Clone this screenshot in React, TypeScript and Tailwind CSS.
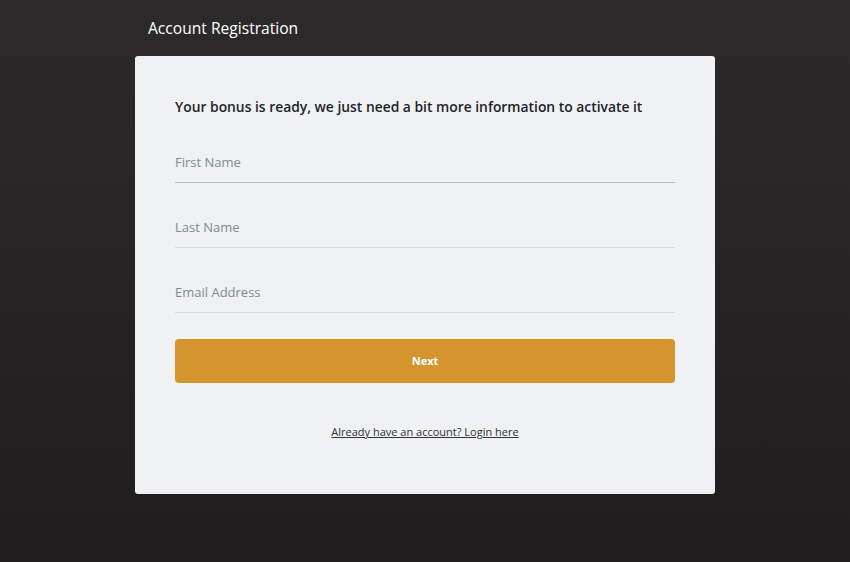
export default function App() {
  const fields = ['First Name', 'Last Name', 'Email Address']

  return (
    <div
      className="min-h-[562px] w-full bg-gradient-to-b from-[#2c2a2b] to-[#1f1d1e] pt-[17px]"
      style={{ fontFamily: '"Open Sans", "Noto Sans", sans-serif' }}
    >
      <div className="mx-auto w-[580px]">
        <h1 className="pl-[13px] text-[15.6px] leading-[22px] text-white">Account Registration</h1>

        <div className="mt-[17px] rounded-[3px] bg-[#eff1f3] px-[40px] pb-[52px] pt-[41px]">
          <p className="text-[13.85px] font-semibold leading-[20px] text-[#1f2329]">
            Your bonus is ready, we just need a bit more information to activate it
          </p>

          <form className="mt-[27px] flex flex-col">
            {fields.map((label, i) => (
              <div key={label} className={i === 0 ? '' : 'mt-[26px]'}>
                <input
                  type="text"
                  placeholder={label}
                  className={
                    'h-[39px] w-full border-b bg-transparent pb-[2px] text-[13px] text-[#333] outline-none placeholder:text-[#7f8b91] ' +
                    (i === 0 ? 'border-[#b9c0c4]' : 'border-[#d6dcdf]')
                  }
                />
              </div>
            ))}

            <button
              type="button"
              className="mt-[26px] h-[44px] w-full rounded-[4px] bg-[#d4952f] text-[11px] font-bold text-white"
            >
              Next
            </button>
          </form>

          <div className="mt-[35px] text-center">
            <a href="#" className="text-[11px] leading-[16px] text-[#333] underline">
              Already have an account? Login here
            </a>
          </div>
        </div>
      </div>
    </div>
  )
}
